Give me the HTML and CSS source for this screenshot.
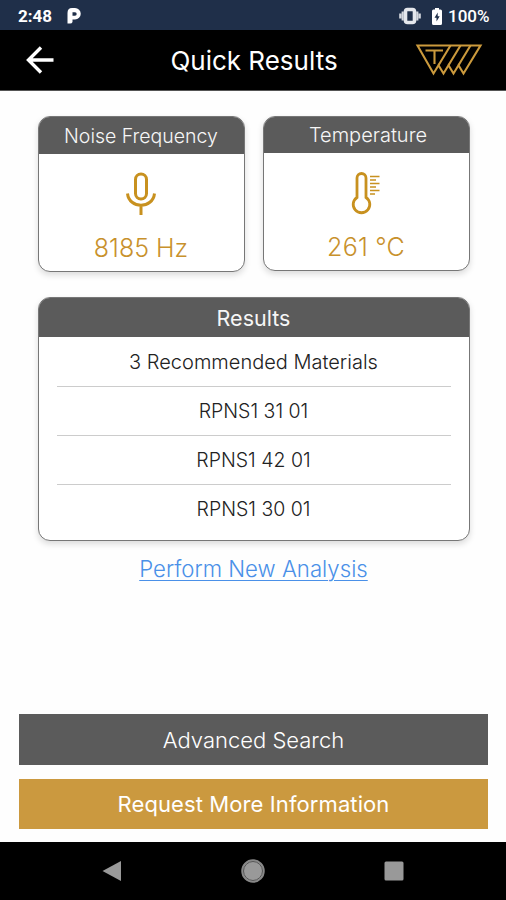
FILE: index.html
```html
<!DOCTYPE html>
<html lang="en">
<head>
    <meta charset="UTF-8">
    <meta name="viewport" content="width=device-width, initial-scale=1.0">
    <title>Quick Results</title>
    <link rel="stylesheet" href="styles.css">
</head>
<body>
    <div class="status-bar">
        <span class="time">2:48</span>
        <svg class="p-icon" width="14" height="16" viewBox="0 0 14 16">
            <path fill="#fff" fill-rule="evenodd" d="M5 0h3a5.700 5.700 0 0 1 0 11.500H5.500V14Q5 15.500 3 15.500H.5V5Q.5 0 5 0zM5.500 4.300v3.400H8a1.700 1.700 0 0 0 0-3.400z"/>
        </svg>
        <svg class="vibrate-icon" width="22" height="18" viewBox="0 0 22 18">
            <rect x="6.500" y="2.500" width="9" height="13" rx="2" fill="none" stroke="#e4e7ec" stroke-width="3.600"/>
            <path d="M3.700 4.500v9M18.300 4.500v9M1.300 6.500v5M20.700 6.500v5" stroke="#d5d9df" stroke-width="2.200"/>
        </svg>
        <svg class="battery-icon" width="10" height="17" viewBox="0 0 10 17">
            <path fill="#fff" d="M3 0h4v1.500h1.500Q10 1.500 10 3v12.500Q10 17 8.500 17h-7Q0 17 0 15.500V3q0-1.500 1.500-1.500H3z"/>
            <path fill="#1f2f49" d="M5.700 4.500 2.500 9.700h2v3.800l3.200-5.300h-2z"/>
        </svg>
        <span class="battery-text">100%</span>
    </div>

    <header class="header">
        <svg class="back" width="28" height="28" viewBox="0 0 28 28">
            <path d="M15 1.500 2.500 14 15 26.500M2.500 14H27.500" fill="none" stroke="#fff" stroke-width="3.400"/>
        </svg>
        <h1>Quick Results</h1>
        <svg class="logo" width="68" height="34" viewBox="0 0 68 34" fill="none" stroke="#cb9a3d" stroke-width="2.100">
            <path d="M2.500 2.500h63L48.500 30.500l-5-8.300-5 8.300-5-8.300-5 8.300-5-8.300-5 8.300z"/>
            <path d="M23.500 22.200 35.500 2.500M33.500 22.200 45.500 2.500M43.500 22.200 55.500 2.500M10.500 7.500H28M19.500 7.500V21"/>
        </svg>
    </header>

    <main class="content">
        <div class="cards">
            <div class="card">
                <h2 class="card-title noise-title">Noise Frequency</h2>
                <svg class="card-icon" width="32" height="44" viewBox="0 0 32 44" fill="none" stroke="#c8911f" stroke-width="3">
                    <rect x="10.500" y="2" width="11" height="25" rx="5.500"/>
                    <path d="M2.500 21.500C4 37 28 37 29.500 21.500M16 33.500V43"/>
                </svg>
                <div class="value hz">8185 Hz</div>
            </div>
            <div class="card card-temp">
                <h2 class="card-title temp-title">Temperature</h2>
                <svg class="card-icon" width="32" height="44" viewBox="0 0 32 44" fill="none" stroke="#c8911f" stroke-width="2.800">
                    <path d="M7 26.500V7a4.500 4.500 0 0 1 9 0v19.500a8.300 8.300 0 1 1-9 0z"/>
                    <path d="M20 5.500h9.500M20 9h6M20 12.500h9.500M20 16h6M20 19.500h9.500M20 23h5" stroke-width="1.500"/>
                </svg>
                <div class="value celsius">261 °C</div>
            </div>
        </div>

        <div class="card results">
            <h2 class="card-title results-title">Results</h2>
            <ul class="result-list">
                <li class="count">3 Recommended Materials</li>
                <li>RPNS1 31 01</li>
                <li>RPNS1 42 01</li>
                <li>RPNS1 30 01</li>
            </ul>
        </div>

        <a class="new-analysis" href="#">Perform New Analysis</a>

        <div class="buttons">
            <button type="button" class="btn-search">Advanced Search</button>
            <button type="button" class="btn-info">Request More Information</button>
        </div>
    </main>

    <nav class="nav-bar">
        <svg width="20" height="22" viewBox="0 0 20 22"><path d="M0.500 11 19 1v20z" fill="#999"/></svg>
        <svg width="24" height="24" viewBox="0 0 24 24">
            <circle cx="12" cy="12" r="11" fill="#999" stroke="#888" stroke-width="1.500"/>
            <circle cx="12" cy="12" r="9.500" fill="#999" stroke="#555" stroke-width="1"/>
        </svg>
        <svg width="20" height="20" viewBox="0 0 20 20"><rect x="0.500" y="0.500" width="19" height="19" rx="1.500" fill="#999"/></svg>
    </nav>
</body>
</html>
```
FILE: styles.css
```css
* {
    box-sizing: border-box;
}

body {
    margin: 0;
    width: 506px;
    height: 900px;
    display: flex;
    flex-direction: column;
    font-family: Inter, "Liberation Sans", sans-serif;
    background-color: #fefefe;
    overflow: hidden;
}

h1, h2, ul {
    margin: 0;
    padding: 0;
    font-weight: normal;
}

.status-bar {
    height: 30px;
    display: flex;
    align-items: center;
    padding: 2px 16px 0 18px;
    background-color: #1f2f49;
    color: #fff;
    font-family: Roboto, sans-serif;
    font-size: 17px;
    font-weight: 700;
}

.time {
    width: 49px;
}

.battery-text {
    width: 42px;
    font-weight: 500;
    white-space: nowrap;
}

.vibrate-icon {
    margin-left: auto;
    margin-right: 11px;
}

.battery-icon {
    margin-right: 6px;
}

.header {
    height: 61px;
    display: flex;
    align-items: center;
    justify-content: space-between;
    padding: 0 23px 0 26px;
    background-color: #000;
    color: #fff;
    border-bottom: 1px solid #555;
}

.back {
    margin-right: 39px;
}

.header h1 {
    font-size: 26px;
    font-weight: 400;
    white-space: nowrap;
}

.content {
    flex: 1;
    display: flex;
    flex-direction: column;
    padding: 25px 18px 13px 19px;
}

.cards {
    display: flex;
    align-items: flex-start;
    gap: 18px;
    padding: 0 18px 0 18.500px;
}

.card {
    width: 207px;
    height: 156px;
    display: flex;
    flex-direction: column;
    align-items: center;
    border: 1px solid #777;
    border-radius: 12px;
    background-color: #fff;
    overflow: hidden;
    box-shadow: 0 3px 6px rgba(0, 0, 0, 0.14);
}

.card-temp {
    height: 155px;
}

.card-title {
    width: 100%;
    height: 37px;
    line-height: 38px;
    background-color: #5b5b5b;
    color: #f6f6f6;
    text-align: center;
    font-size: 19.500px;
    font-weight: 300;
    white-space: nowrap;
}

.temp-title {
    height: 36px;
    line-height: 36px;
    padding-left: 4px;
    font-size: 20px;
}

.card-icon {
    margin-top: 18px;
}

.value {
    margin-top: 15px;
    line-height: 34px;
    color: #c8912c;
    font-size: 25px;
    font-weight: 300;
    white-space: nowrap;
}

.celsius {
    letter-spacing: 0.2px;
}

.results {
    width: 432px;
    height: 244px;
    margin: 25px 18px 0 18.500px;
}

.results-title {
    height: 39px;
    line-height: 40px;
    font-size: 21.500px;
    font-weight: 400;
}

.result-list {
    width: 394px;
    list-style: none;
}

.result-list li {
    height: 49px;
    line-height: 49px;
    border-bottom: 1px solid #ccc;
    color: #222;
    text-align: center;
    font-size: 19.500px;
    font-weight: 300;
}

.result-list li.count {
    height: 50px;
    line-height: 51px;
    font-size: 20px;
}

.result-list li:last-child {
    border-bottom: none;
}

.new-analysis {
    align-self: center;
    margin-top: 13px;
    line-height: 30px;
    color: #4a90e8;
    font-size: 22.200px;
    font-weight: 300;
    text-decoration-thickness: 1px;
    text-underline-offset: 3px;
    white-space: nowrap;
}

.buttons {
    margin-top: auto;
    display: flex;
    flex-direction: column;
    gap: 14px;
}

.buttons button {
    height: 50px;
    padding: 0;
    border: none;
    color: #fff;
    font-family: inherit;
    font-size: 22px;
    cursor: pointer;
}

.buttons .btn-search {
    height: 51px;
    background-color: #5b5b5b;
    font-weight: 300;
}

.buttons .btn-info {
    background-color: #cb993f;
    letter-spacing: 0.1px;
}

.nav-bar {
    height: 58px;
    display: flex;
    align-items: center;
    justify-content: space-between;
    padding: 0 102px;
    background-color: #000;
}
```
